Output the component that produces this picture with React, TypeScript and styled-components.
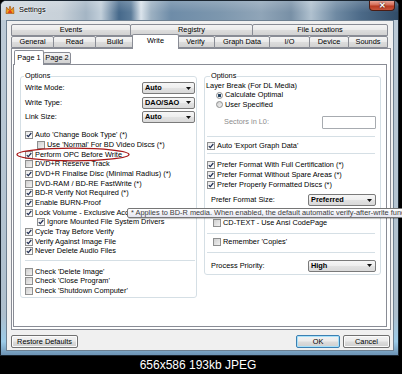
import React from "react";
import styled, { createGlobalStyle } from "styled-components";

const FONT = `"Liberation Sans", Arial, sans-serif`;

const GlobalStyle = createGlobalStyle`
  html, body { margin: 0; padding: 0; background: #000; }
  body { font-family: ${FONT}; font-size: 7.36px; color: #000; }
  #root { width: 402px; height: 374px; overflow: hidden; }
`;

const Screen = styled.div`
  position: relative;
  width: 402px;
  height: 374px;
  overflow: hidden;
  background: #000;
  display: flex;
  flex-direction: column;
`;

const Window = styled.div`
  box-sizing: border-box;
  width: 399px;
  height: 356px;
  flex: none;
  display: flex;
  flex-direction: column;
  border: 1px solid #1b2631;
  border-radius: 6px 6px 0 0;
  overflow: hidden;
  background: #b6c6d3;
`;

const TitleBar = styled.div`
  height: 19px;
  flex: none;
  display: flex;
  align-items: flex-start;
  padding: 3px 0 0 4px;
  box-sizing: border-box;
  background:
    linear-gradient(180deg, rgba(255,255,255,0.18), rgba(255,255,255,0) 60%),
    linear-gradient(90deg, #cfd7de 0px, #c8d1d9 60px, #a4b5c4 85px, #c2cfda 100px,
      #46698b 118px, #5b7b99 130px, #dbe4ec 140px, #9db1c2 150px, #6e8ca8 170px,
      #7d97ae 220px, #90a5b8 260px, #7890a6 290px, #b0c1cf 310px, #6f8aa3 335px,
      #4c6a88 360px, #2f4a66 399px);
`;

const AppIcon = styled.svg`
  width: 10px;
  height: 10px;
  flex: none;
  margin-top: 1px;
`;

const Title = styled.div`
  margin-left: 4px;
  line-height: 11px;
  color: #000;
  text-shadow: 0 0 3px #fff, 0 0 2px #fff;
`;

const CloseButton = styled.div`
  margin-left: auto;
  margin-right: 3px;
  margin-top: -3px;
  width: 26px;
  height: 10px;
  box-sizing: border-box;
  border: 1px solid #4a1c14;
  border-top: none;
  border-radius: 0 0 4px 4px;
  background: linear-gradient(180deg, #e9a597 0%, #d36a55 45%, #b83a20 55%, #c8553c 100%);
  display: flex;
  align-items: center;
  justify-content: center;
  color: #fff;
  font-size: 8px;
  font-weight: bold;
  line-height: 8px;
  text-shadow: 0 0 2px #000;
`;

const Frame = styled.div`
  flex: 1;
  display: flex;
  padding: 0 4px 4px 5px;
  background: linear-gradient(180deg, #bccad6 0%, #aebfcd 88%, #9ccbe8 96%, #6d93b4 100%);
`;

const Client = styled.div`
  flex: 1;
  display: flex;
  flex-direction: column;
  border: 1px solid #6e8091;
  background: #f0f0f0;
  padding: 3px 0 0 4px;
`;

const TabControl = styled.div`
  width: 380px;
  display: flex;
  flex-direction: column;
`;

const TabRow = styled.div`
  height: 12px;
  display: flex;
  align-items: flex-end;
  position: relative;
  z-index: 1;
`;

const Tab = styled.div<{ $w: number; $sel?: boolean }>`
  box-sizing: border-box;
  flex: none;
  width: ${(p) => p.$w + (p.$sel ? 4 : 0)}px;
  height: ${(p) => (p.$sel ? 15 : 12)}px;
  margin-left: ${(p) => (p.$sel ? -3 : -1)}px;
  margin-right: ${(p) => (p.$sel ? -2 : 0)}px;
  margin-bottom: ${(p) => (p.$sel ? -1 : 0)}px;
  border: 1px solid #898c95;
  border-bottom: ${(p) => (p.$sel ? "none" : "1px solid #898c95")};
  border-radius: 2px 2px 0 0;
  background: ${(p) =>
    p.$sel ? "#fff" : "linear-gradient(180deg, #f4f4f4 0%, #ebebeb 45%, #dcdcdc 55%, #d2d2d2 100%)"};
  position: relative;
  z-index: ${(p) => (p.$sel ? 2 : 1)};
  text-align: center;
  line-height: ${(p) => (p.$sel ? 12 : 10)}px;
  white-space: nowrap;
  &:first-child { margin-left: 0; }
`;

const Panel = styled.div`
  box-sizing: border-box;
  height: 282px;
  border: 1px solid #898c95;
  background: #fff;
  padding: 1px 3px 2px 1px;
  display: flex;
  flex-direction: column;
`;

const SubTabRow = styled.div`
  height: 14px;
  flex: none;
  display: flex;
  align-items: flex-end;
  padding-left: 1px;
  position: relative;
  z-index: 1;
`;

const SubTab = styled.div<{ $w: number; $sel?: boolean }>`
  box-sizing: border-box;
  flex: none;
  width: ${(p) => p.$w}px;
  height: ${(p) => (p.$sel ? 15 : 12)}px;
  margin-left: ${(p) => (p.$sel ? 0 : -1)}px;
  margin-bottom: ${(p) => (p.$sel ? -1 : 0)}px;
  border: 1px solid #898c95;
  border-bottom: ${(p) => (p.$sel ? "none" : "1px solid #898c95")};
  border-radius: 2px 2px 0 0;
  background: ${(p) =>
    p.$sel ? "#fff" : "linear-gradient(180deg, #f4f4f4 0%, #ebebeb 45%, #dcdcdc 55%, #d2d2d2 100%)"};
  position: relative;
  z-index: ${(p) => (p.$sel ? 2 : 1)};
  text-align: center;
  line-height: ${(p) => (p.$sel ? 13 : 10)}px;
  white-space: nowrap;
`;

const SubPanel = styled.div`
  box-sizing: border-box;
  height: 263px;
  flex: none;
  border: 1px solid #898c95;
  display: flex;
  align-items: flex-start;
  padding: 6px 0 0 6px;
  gap: 7px;
`;

const Group = styled.fieldset<{ $pl: number; $pr: number }>`
  box-sizing: border-box;
  width: 177px;
  min-width: 0;
  margin: 0;
  border: 1px solid #d5dfe5;
  border-radius: 3px;
  padding: 0 ${(p) => p.$pr}px 1px ${(p) => p.$pl}px;
  display: flex;
  flex-direction: column;
`;

const Legend = styled.legend<{ $ml: number }>`
  padding: 0 1px;
  margin-left: ${(p) => p.$ml}px;
  line-height: 10px;
  height: 10px;
`;

const DropRow = styled.div<{ $mt?: number; $pl?: number }>`
  display: flex;
  align-items: center;
  justify-content: space-between;
  height: 14.5px;
  margin-top: ${(p) => p.$mt ?? 0}px;
  padding-left: ${(p) => p.$pl ?? 0}px;
`;

const Label = styled.span<{ $muted?: boolean }>`
  line-height: 10px;
  white-space: nowrap;
  color: ${(p) => (p.$muted ? "#8d8d8d" : "#000")};
`;

const Select = styled.div<{ $w: number }>`
  box-sizing: border-box;
  width: ${(p) => p.$w}px;
  height: 12px;
  border: 1px solid #7a7a7a;
  border-radius: 2px;
  background: linear-gradient(180deg, #f6f6f6 0%, #eeeeee 48%, #e2e2e2 52%, #d9d9d9 100%);
  display: flex;
  align-items: center;
  justify-content: space-between;
  padding: 0 3px 0 2px;
  font-weight: bold;
  line-height: 10px;
`;

const TextInput = styled.div`
  box-sizing: border-box;
  width: 54px;
  height: 13px;
  border: 1px solid #a7abb0;
  border-radius: 1px;
  background: #fff;
`;

const CheckRow = styled.div<{ $indent?: number; $mt?: number; $h?: number }>`
  display: flex;
  align-items: center;
  height: ${(p) => p.$h ?? 9.67}px;
  margin-top: ${(p) => p.$mt ?? 0}px;
  padding-left: ${(p) => p.$indent ?? 0}px;
  white-space: nowrap;
  line-height: 10px;
`;

const Box = styled.span<{ $on: boolean }>`
  box-sizing: border-box;
  flex: none;
  width: 8px;
  height: 8px;
  margin-right: 2px;
  border: 1px solid #8e8f8f;
  background: ${(p) =>
    p.$on ? "linear-gradient(135deg, #e9e9e9, #ffffff)" : "linear-gradient(135deg, #cfcfcf, #f1f1f1)"};
  display: flex;
  align-items: center;
  justify-content: center;
`;

const RadioDot = styled.span<{ $on: boolean }>`
  box-sizing: border-box;
  flex: none;
  width: 7px;
  height: 7px;
  margin-right: 2px;
  border-radius: 50%;
  border: 1px solid #8e8f8f;
  background: ${(p) =>
    p.$on
      ? "radial-gradient(circle, #1d3550 0, #2c4d70 1.6px, #f4f4f4 2px)"
      : "linear-gradient(135deg, #cfcfcf, #f4f4f4)"};
`;

const Sep = styled.div<{ $mt: number; $ml?: number; $mr?: number }>`
  height: 1px;
  flex: none;
  background: #d5dfe5;
  margin: ${(p) => p.$mt}px ${(p) => p.$mr ?? 0}px 0 ${(p) => p.$ml ?? 0}px;
`;

const ButtonRow = styled.div`
  width: 380px;
  display: flex;
  margin-top: 5px;
  gap: 3px;
`;

const Button = styled.div<{ $w: number; $default?: boolean }>`
  box-sizing: border-box;
  width: ${(p) => p.$w}px;
  height: 13px;
  border: 1px solid ${(p) => (p.$default ? "#3c7fb1" : "#707070")};
  border-radius: 2px;
  background: linear-gradient(180deg, #f2f2f2 0%, #ebebeb 48%, #dddddd 52%, #cfcfcf 100%);
  box-shadow: ${(p) => (p.$default ? "inset 0 0 0 1px #a6e1fb" : "inset 0 0 0 1px #fbfbfb")};
  display: flex;
  align-items: center;
  justify-content: center;
  line-height: 10px;
  &:first-child { margin-right: auto; }
  &:last-child { margin-right: 1px; }
`;

const Caption = styled.div`
  flex: 1;
  display: flex;
  align-items: center;
  justify-content: center;
  padding-right: 6px;
  color: #fff;
  font-family: ${FONT};
  font-size: 12px;
`;

const Tooltip = styled.div`
  position: absolute;
  left: 127px;
  top: 207.5px;
  height: 10.5px;
  width: 300px;
  box-sizing: border-box;
  border: 1px solid #767676;
  border-radius: 2px;
  background: linear-gradient(180deg, #ffffff, #e4e5f0);
  box-shadow: 1px 1px 1px rgba(0, 0, 0, 0.25);
  padding: 0 3px;
  line-height: 8.5px;
  white-space: nowrap;
  color: #3c3c3c;
  z-index: 5;
`;

const Ellipse = styled.svg`
  position: absolute;
  left: 16px;
  top: 147px;
  width: 114px;
  height: 15px;
  z-index: 4;
  overflow: visible;
`;

const Arrow = () => (
  <svg width="5" height="3" viewBox="0 0 5 3">
    <path d="M0 0 L5 0 L2.5 3 Z" fill="#111" />
  </svg>
);

const Check = ({ on, children, indent, mt, h }: { on: boolean; children: React.ReactNode; indent?: number; mt?: number; h?: number }) => (
  <CheckRow $indent={indent} $mt={mt} $h={h}>
    <Box $on={on}>
      {on && (
        <svg width="6" height="6" viewBox="0 0 6 6">
          <path d="M0.8 3.1 L2.3 4.7 L5.3 1" stroke="#1f2d52" strokeWidth="1.2" fill="none" />
        </svg>
      )}
    </Box>
    <Label>{children}</Label>
  </CheckRow>
);

const Radio = ({ on, children, mt }: { on: boolean; children: React.ReactNode; mt?: number }) => (
  <CheckRow $indent={11} $mt={mt} $h={9.5}>
    <RadioDot $on={on} />
    <Label>{children}</Label>
  </CheckRow>
);

const row1 = [
  { t: "Events", w: 120 },
  { t: "Registry", w: 123 },
  { t: "File Locations", w: 136 },
];

const row2 = [
  { t: "General", w: 43 },
  { t: "Read", w: 43 },
  { t: "Build", w: 40 },
  { t: "Write", w: 43, sel: true },
  { t: "Verify", w: 39 },
  { t: "Graph Data", w: 56 },
  { t: "I/O", w: 41 },
  { t: "Device", w: 40 },
  { t: "Sounds", w: 40 },
];

const leftChecks: { t: string; on: boolean; indent?: number }[] = [
  { t: "Auto 'Change Book Type' (*)", on: true },
  { t: "Use 'Normal' For BD Video Discs (*)", on: false, indent: 12 },
  { t: "Perform OPC Before Write", on: true },
  { t: "DVD+R Reserve Track", on: false },
  { t: "DVD+R Finalise Disc (Minimal Radius) (*)", on: true },
  { t: "DVD-RAM / BD-RE FastWrite (*)", on: false },
  { t: "BD-R Verify Not Required (*)", on: true },
  { t: "Enable BURN-Proof", on: true },
  { t: "Lock Volume - Exclusive Access", on: true },
  { t: "Ignore Mounted File System Drivers", on: true, indent: 12 },
  { t: "Cycle Tray Before Verify", on: true },
  { t: "Verify Against Image File", on: true },
  { t: "Never Delete Audio Files", on: true },
];

const finalChecks = ["Check 'Delete Image'", "Check 'Close Program'", "Check 'Shutdown Computer'"];

export default function App() {
  return (
    <>
      <GlobalStyle />
      <Screen>
        <Window>
          <TitleBar>
            <AppIcon viewBox="0 0 10 10">
              <path d="M1 8.5 L1.5 2 L3.5 5 L5 1 L6.5 5 L8.5 2 L9 8.5 Z" fill="#f0a21c" stroke="#9a4a0a" strokeWidth="0.6" />
              <path d="M2.5 8 L5 4 L7.5 8 Z" fill="#e0401a" />
            </AppIcon>
            <Title>Settings</Title>
            <CloseButton>✕</CloseButton>
          </TitleBar>
          <Frame>
            <Client>
              <TabControl>
                <TabRow>
                  {row1.map((t) => (
                    <Tab key={t.t} $w={t.w}>{t.t}</Tab>
                  ))}
                </TabRow>
                <TabRow>
                  {row2.map((t) => (
                    <Tab key={t.t} $w={t.w} $sel={t.sel}>{t.t}</Tab>
                  ))}
                </TabRow>
                <Panel>
                  <SubTabRow>
                    <SubTab $w={30} $sel>Page 1</SubTab>
                    <SubTab $w={28}>Page 2</SubTab>
                  </SubTabRow>
                  <SubPanel>
                    <Group $pl={4} $pr={1}>
                      <Legend $ml={-1}>Options</Legend>
                      <DropRow>
                        <Label>Write Mode:</Label>
                        <Select $w={53}>Auto<Arrow /></Select>
                      </DropRow>
                      <DropRow>
                        <Label>Write Type:</Label>
                        <Select $w={53}>DAO/SAO<Arrow /></Select>
                      </DropRow>
                      <DropRow>
                        <Label>Link Size:</Label>
                        <Select $w={53}>Auto<Arrow /></Select>
                      </DropRow>
                      {leftChecks.map((c, i) => (
                        <Check key={c.t} on={c.on} indent={c.indent} mt={i === 0 ? 6 : 0}>
                          {c.t}
                        </Check>
                      ))}
                      <Sep $mt={3.5} />
                      {finalChecks.map((t, i) => (
                        <Check key={t} on={false} mt={i === 0 ? 6.7 : 0} h={9.5}>
                          {t}
                        </Check>
                      ))}
                    </Group>
                    <Group $pl={0} $pr={4}>
                      <Legend $ml={5}>Options</Legend>
                      <CheckRow $indent={1} $h={9}>
                        <Label>Layer Break (For DL Media)</Label>
                      </CheckRow>
                      <Radio on mt={0.5}>Calculate Optimal</Radio>
                      <Radio on={false}>User Specified</Radio>
                      <DropRow $mt={5.5} $pl={19}>
                        <Label $muted>Sectors in L0:</Label>
                        <TextInput />
                      </DropRow>
                      <Sep $mt={6.5} $ml={2} $mr={1} />
                      <Check on indent={2} mt={4.5}>Auto 'Export Graph Data'</Check>
                      <Sep $mt={2} $ml={2} $mr={1} />
                      <Check on indent={2} mt={6.3}>Prefer Format With Full Certification (*)</Check>
                      <Check on indent={2}>Prefer Format Without Spare Areas (*)</Check>
                      <Check on indent={2}>Prefer Properly Formatted Discs (*)</Check>
                      <DropRow $mt={3.5} $pl={6}>
                        <Label>Prefer Format Size:</Label>
                        <Select $w={68}>Preferred<Arrow /></Select>
                      </DropRow>
                      <Check on={false} indent={8} mt={11}>CD-TEXT - Use Ansi CodePage</Check>
                      <Sep $mt={4.5} $ml={2} $mr={1} />
                      <Check on={false} indent={8} mt={3.2}>Remember 'Copies'</Check>
                      <Sep $mt={6} $ml={2} $mr={1} />
                      <DropRow $mt={5} $pl={6}>
                        <Label>Process Priority:</Label>
                        <Select $w={68}>High<Arrow /></Select>
                      </DropRow>
                    </Group>
                  </SubPanel>
                </Panel>
              </TabControl>
              <ButtonRow>
                <Button $w={67}>Restore Defaults</Button>
                <Button $w={44} $default>OK</Button>
                <Button $w={47}>Cancel</Button>
              </ButtonRow>
            </Client>
          </Frame>
        </Window>
        <Caption>656x586 193kb JPEG</Caption>
        <Ellipse viewBox="0 0 114 15">
          <ellipse cx="57" cy="7.5" rx="56" ry="6.3" stroke="#a81818" strokeWidth="1.3" fill="none" />
        </Ellipse>
        <Tooltip>* Applies to BD-R media. When enabled, the default automatic verify-after-write function is skipped.</Tooltip>
      </Screen>
    </>
  );
}
